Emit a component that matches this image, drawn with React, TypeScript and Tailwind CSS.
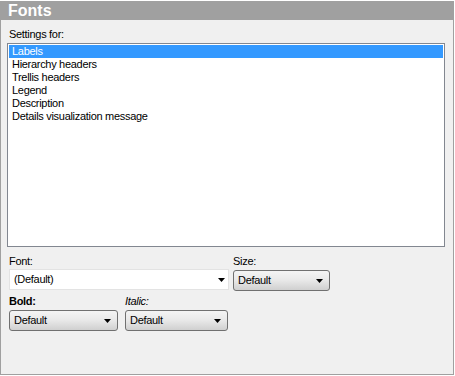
import React from "react";

const items = [
  "Labels",
  "Hierarchy headers",
  "Trellis headers",
  "Legend",
  "Description",
  "Details visualization message",
];

function Arrow() {
  return (
    <svg width="7" height="4" viewBox="0 0 7 4" className="block">
      <path d="M0 0H7L3.5 4Z" fill="#000" />
    </svg>
  );
}

function Drop({ w, label }: { w: string; label: string }) {
  return (
    <div
      className={`${w} h-[21px] flex items-center justify-between pl-[4px] pr-[6px] rounded-[3px] border border-[#707070] bg-gradient-to-b from-[#f4f4f4] via-[#e8e8e8] to-[#d0d0d0] text-[11px] tracking-[-0.3px] text-black`}
    >
      <span>{label}</span>
      <Arrow />
    </div>
  );
}

export default function App() {
  return (
    <div
      className="w-[455px] h-[376px] bg-white pt-[1px]"
      style={{ fontFamily: "Tahoma, 'Liberation Sans', Arial, sans-serif" }}
    >
      <div className="w-[454px] h-[374px] border-l border-r border-b border-[#a0a0a0] bg-[#f0f0f0] flex flex-col">
        <div className="h-[19px] bg-[#a0a0a0] flex items-center pl-[7px] text-white font-bold text-[16px] leading-none">
          Fonts
        </div>
        <div className="pl-[6px] pr-[8px] flex flex-col text-[11px] tracking-[-0.3px]">
          <div className="leading-[13px] text-black mt-[8px] pl-[2px]">Settings for:</div>
          <div className="mt-[2px] w-[438px] h-[204px] border border-[#828790] bg-white p-[1px]">
            {items.map((t, i) => (
              <div
                key={t}
                className={`h-[13px] leading-[13px] pl-[3px] ${
                  i === 0 ? "bg-[#3399ff] text-white" : "text-black"
                }`}
              >
                {t}
              </div>
            ))}
          </div>
          <div className="flex mt-[8px]">
            <div className="flex flex-col w-[226px] pl-[2px]">
              <div className="leading-[13px] text-black">Font:</div>
              <div className="mt-[1px] w-[220px] h-[21px] bg-white border border-[#e3e3e3] flex items-center justify-between pl-[4px] pr-[3px] text-black">
                <span>(Default)</span>
                <Arrow />
              </div>
            </div>
            <div className="flex flex-col">
              <div className="leading-[13px] text-black">Size:</div>
              <div className="mt-[2px]">
                <Drop w="w-[97px]" label="Default" />
              </div>
            </div>
          </div>
          <div className="flex mt-[4px] pl-[2px] gap-[7px]">
            <div className="flex flex-col">
              <div className="leading-[13px] text-black font-bold">Bold:</div>
              <div className="mt-[2px]">
                <Drop w="w-[109px]" label="Default" />
              </div>
            </div>
            <div className="flex flex-col">
              <div className="leading-[13px] text-black italic">Italic:</div>
              <div className="mt-[2px]">
                <Drop w="w-[103px]" label="Default" />
              </div>
            </div>
          </div>
        </div>
      </div>
    </div>
  );
}
